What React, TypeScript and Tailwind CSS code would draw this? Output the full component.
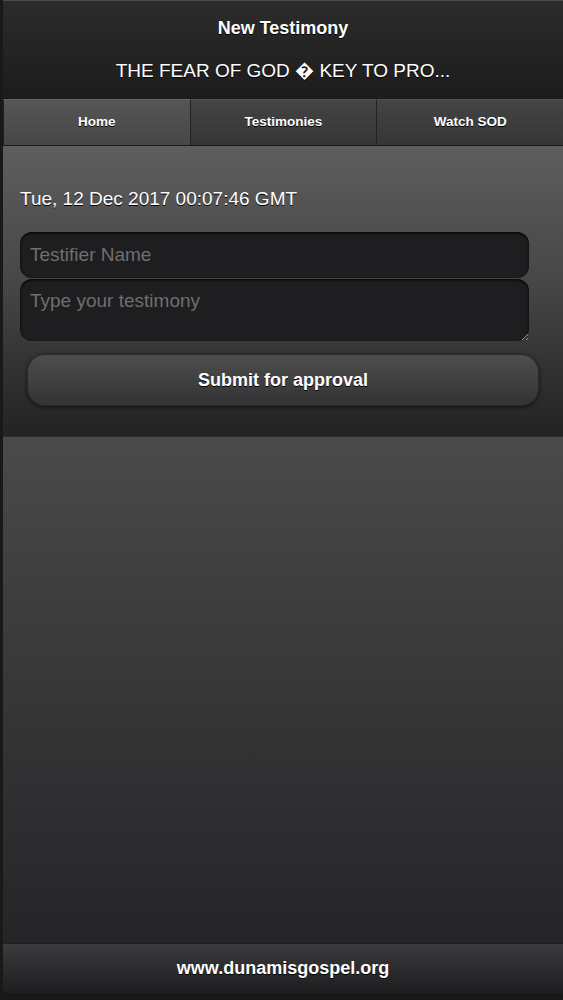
const NAV = ["Home", "Testimonies", "Watch SOD"];

export default function App() {
  return (
    <div
      className="flex min-h-[1000px] flex-col border-l-[3px] border-[#19191a] bg-[#1c1c1d] text-white"
      style={{ fontFamily: '"Liberation Sans", Arial, sans-serif' }}
    >
      {/* Header */}
      <header className="h-[98px] border-t border-[#4a4a4a] bg-gradient-to-b from-[#2c2c2c] to-[#1c1c1c] text-center [text-shadow:0_1px_0_#000]">
        <h1 className="pt-[14px] text-[18px] font-bold leading-[26px]">New Testimony</h1>
        <p className="mt-[17px] text-[19px] leading-[26px]">
          THE FEAR OF GOD {"\uFFFD"} KEY TO PRO...
        </p>
      </header>

      {/* Nav */}
      <nav className="grid h-[48px] grid-cols-3 border-y border-[#1a1a1a]">
        {NAV.map((label, i) => (
          <button
            key={label}
            className={`flex items-center justify-center border-l border-[#222] text-[13.5px] font-bold [text-shadow:0_1px_0_#000] ${
              i === 0
                ? "border-t border-t-[#666] bg-gradient-to-b from-[#555555] to-[#474747]"
                : "border-t border-t-[#555] bg-gradient-to-b from-[#444444] to-[#363636]"
            }`}
          >
            {label}
          </button>
        ))}
      </nav>

      {/* Form */}
      <section className="h-[290px] bg-gradient-to-b from-[#5e5e5e] via-[#454545] to-[#232224] pt-[41px]">
        <p className="pl-[17px] text-[19px] leading-[24px] [text-shadow:0_1px_0_#000]">
          Tue, 12 Dec 2017 00:07:46 GMT
        </p>
        <div className="mt-[21px] pl-[17px] pr-[34px]">
          <input
            placeholder="Testifier Name"
            className="block h-[46px] w-full rounded-[12px] bg-[#1e1d1f] px-[10px] text-[19px] text-white shadow-[inset_0_1px_3px_#000] outline-none placeholder:text-[#6f6f6f]"
          />
          <textarea
            placeholder="Type your testimony"
            className="mt-px block h-[62px] w-full resize-y rounded-[12px] bg-[#1e1d1f] px-[10px] pt-[10px] text-[19px] leading-[24px] text-white shadow-[inset_0_1px_3px_#000] outline-none placeholder:text-[#6f6f6f]"
          />
        </div>
        <div className="mt-[13px] pl-[24px] pr-[24px]">
          <button className="h-[52px] w-full rounded-[18px] border border-[#2a2a2a] bg-gradient-to-b from-[#4e4e4e] to-[#333335] text-[18px] font-bold shadow-[0_1px_4px_rgba(0,0,0,0.6)] [text-shadow:0_1px_0_#000]">
            Submit for approval
          </button>
        </div>
      </section>

      {/* Empty body */}
      <main className="flex-1 border-t border-[#2a2a2a] bg-gradient-to-b from-[#4a4a4a] to-[#252427]" />

      {/* Footer */}
      <footer className="flex h-[50px] items-center justify-center border-t border-[#1e1e1e] bg-gradient-to-b from-[#3b3b3d] to-[#1e1e20] text-[18px] font-bold [text-shadow:0_1px_0_#000]">
        www.dunamisgospel.org
      </footer>
      <div className="h-[7px] bg-[#19191a]" />
    </div>
  );
}
